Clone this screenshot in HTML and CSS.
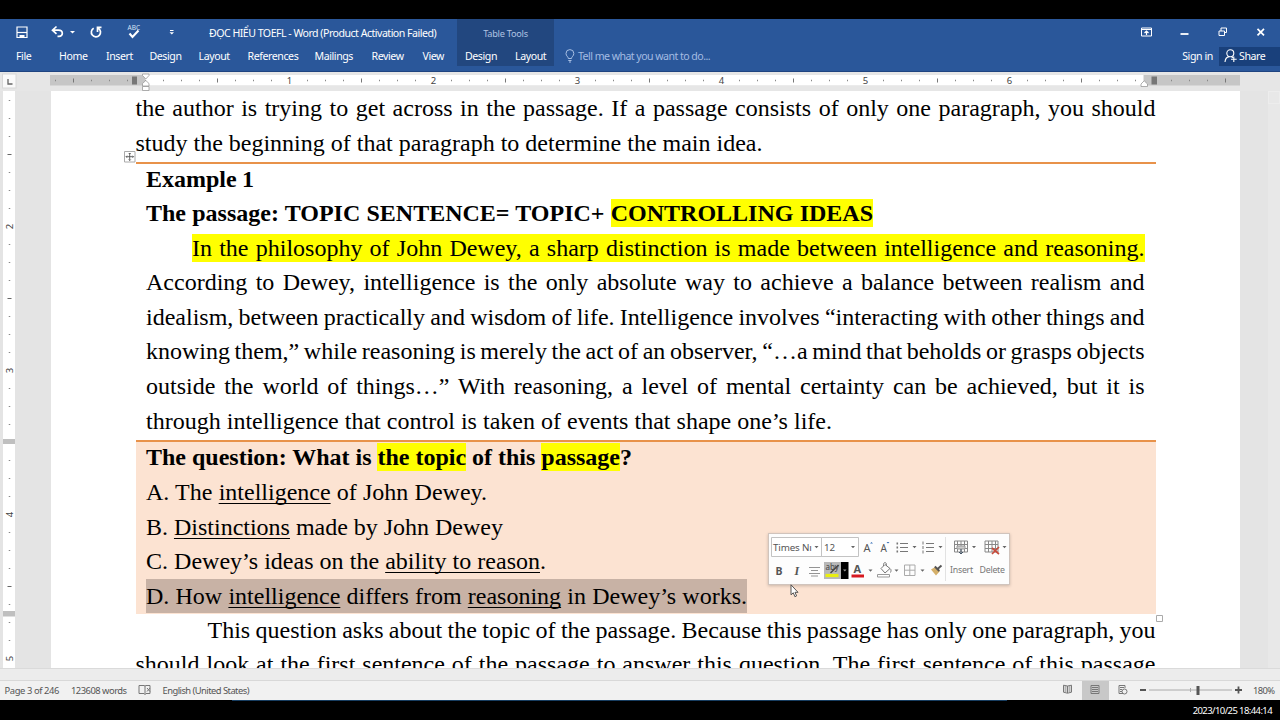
FILE: index.html
```html
<!DOCTYPE html>
<html lang="en">
<head>
<meta charset="utf-8">
<title>ĐỌC HIỂU TOEFL - Word</title>
<link rel="stylesheet" href="styles.css">
</head>
<body>
<div class="screen">
  <header class="ribbon">
    <div class="left">
      <div class="titlebar">
        <svg class="qat" width="200" height="28" viewBox="0 19 200 28" fill="none" stroke="#fff">
          <path d="M17 27h10v10.500h-10z" stroke-width="1.200"/><path d="M17 32.500h10" stroke-width="1.200"/><path d="M19.500 38v-3h5v3" fill="#fff" stroke="none"/>
          <path d="M56.500 26.500l-4 3.700 4 3.700M53 30.200h5.500c5 0 5 6.200.5 6.200h-1.500" stroke-width="1.700"/>
          <path d="M70 31h5l-2.500 2.500z" fill="#fff" stroke="none"/>
          <path d="M98.500 28.400a4.600 4.600 0 1 1-4.800-.2M97.500 32v-4.600h4" stroke-width="1.700"/>
          <path d="M129.500 33.500l3 3.500 6-6.500" stroke-width="2.100"/>
          <path d="M170 30.500h3.500" stroke-width="1"/><path d="M169.500 32.200h4.500l-2.200 2.200z" fill="#fff" stroke="none"/>
          <text x="127.500" y="29.500" class="abc">ABC</text>
        </svg>
        <span class="doc-title">ĐỌC HIỂU TOEFL - Word (Product Activation Failed)</span>
      </div>
      <nav class="tabs"><span>File</span><span>Home</span><span>Insert</span><span>Design</span><span>Layout</span><span>References</span><span>Mailings</span><span>Review</span><span>View</span></nav>
    </div>
    <div class="tools">
      <div class="tools-title">Table Tools</div>
      <div class="tools-tabs"><span>Design</span><span>Layout</span></div>
    </div>
    <div class="tell">
      <svg width="10" height="14" viewBox="0 0 10 14" fill="none" stroke="#a9c0e4"><path d="M3.300 9.500c0-2-2.300-2.300-2.300-5a3.900 3.900 0 0 1 7.800 0c0 2.700-2.300 3-2.300 5zM3.300 11.500h3.200M4 13h2"/></svg>
      <span>Tell me what you want to do...</span>
    </div>
    <div class="right">
      <svg width="145" height="28" viewBox="1135 19 145 28" fill="none" stroke="#fff">
        <path d="M1141.500 28h10v8h-10zM1141.500 29.500h10" /><path d="M1146.500 35v-4M1144.500 33l2-2 2 2" stroke-width="1.200"/>
        <path d="M1180.500 34h8" stroke-width="1.800"/>
        <path d="M1219 31h5.500v4.500h-5.500zM1221 31v-3h5.500v4.500h-2"/>
        <path d="M1257.500 28.800l6.500 6.500M1264 28.800l-6.500 6.500" stroke-width="1.700"/>
      </svg>
      <div class="account"><span class="signin">Sign in</span>
        <span class="share"><svg width="14" height="14" viewBox="0 0 14 14" fill="none" stroke="#fff" stroke-width="1.100"><circle cx="6.300" cy="4.300" r="3.500"/><path d="M1 13c.3-3.500 2-5 4-5.400M7.500 7.800l1.500 1M9.800 7.500v5.500M7 10.300h5.700"/></svg>Share</span></div>
    </div>
  </header>

  <div class="ruler">
    <svg width="1280" height="20" viewBox="0 72 1280 20">
      <rect x="2.500" y="74" width="13.500" height="14" fill="#fafafa" stroke="#d8d8d8"/>
      <path d="M8 79v5h4.500" fill="none" stroke="#666" stroke-width="1.300"/>
      <rect x="50" y="75" width="1190" height="10.500" fill="#c6c6c6"/>
      <rect x="145" y="75" width="998.500" height="10.500" fill="#fff"/>
      <path d="M55 80.500h1180" stroke="#888" stroke-width="1.300" stroke-dasharray="1 17"/>
      <path d="M73 80.500h1160" stroke="#777" stroke-width="4" stroke-dasharray="1 143"/>
      <g fill="#fff"><rect x="285" y="76" width="8" height="9"/><rect x="429" y="76" width="8" height="9"/><rect x="573" y="76" width="8" height="9"/><rect x="717" y="76" width="8" height="9"/><rect x="861" y="76" width="8" height="9"/><rect x="1005" y="76" width="8" height="9"/></g>
      <g class="num"><text x="289.500" y="84">1</text><text x="433.500" y="84">2</text><text x="577.500" y="84">3</text><text x="721.500" y="84">4</text><text x="865.500" y="84">5</text><text x="1009.500" y="84">6</text></g>
      <rect x="132" y="76.500" width="5" height="8" fill="#777"/><rect x="1151.500" y="76.500" width="5.500" height="8" fill="#777"/>
      <g fill="#fff" stroke="#999" stroke-width=".8"><path d="M142.500 74h6.500v1.500l-3.200 3.500-3.300-3.500zM142.500 86v-2.500l3.300-3 3.200 3v2.500zM142.500 86.500h6.500v4h-6.500zM1141 86.500v-2.500l3.200-3.200 3.300 3.200v2.500z"/></g>
    </svg>
  </div>

  <div class="work">
    <svg class="vruler" width="50" height="577" viewBox="0 91 50 577">
      <rect x="3" y="91" width="12" height="577" fill="#fff"/>
      <path d="M9.500 100v568" stroke="#888" stroke-width="1.500" stroke-dasharray="1 17"/>
      <path d="M9.500 154v514" stroke="#666" stroke-width="4" stroke-dasharray="1 143"/>
      <g fill="#fff"><rect x="5" y="222" width="9" height="8"/><rect x="5" y="366" width="9" height="8"/><rect x="5" y="510" width="9" height="8"/><rect x="5" y="654" width="9" height="8"/></g>
      <g fill="#bfbfbf"><rect x="3" y="439" width="12" height="5"/><rect x="3" y="611" width="12" height="5.500"/></g>
      <g class="num"><text transform="translate(13 226.500) rotate(-90)">2</text><text transform="translate(13 370.500) rotate(-90)">3</text><text transform="translate(13 514.500) rotate(-90)">4</text><text transform="translate(13 658.500) rotate(-90)">5</text></g>
    </svg>
    <main class="page">
      <div class="para">
        <p class="line first">the author is trying to get across in the passage. If a passage consists of only one paragraph, you should</p>
        <p class="line w627">study the beginning of that paragraph to determine the main idea.</p>
      </div>
      <section class="cell">
        <p class="line head w108"><b>Example 1</b></p>
        <p class="line w727"><b>The passage: TOPIC SENTENCE= TOPIC+ <mark>CONTROLLING IDEAS</mark></b></p>
        <p class="line indent"><mark>In the philosophy of John Dewey, a sharp distinction is made between intelligence and reasoning.</mark></p>
        <p class="line">According to Dewey, intelligence is the only absolute way to achieve a balance between realism and</p>
        <p class="line">idealism, between practically and wisdom of life. Intelligence involves “interacting with other things and</p>
        <p class="line">knowing them,” while reasoning is merely the act of an observer, “…a mind that beholds or grasps objects</p>
        <p class="line">outside the world of things…” With reasoning, a level of mental certainty can be achieved, but it is</p>
        <p class="line w686">through intelligence that control is taken of events that shape one’s life.</p>
      </section>
      <section class="cell question">
        <p class="line head w486"><b>The question: What is <mark>the topic</mark> of this <mark>passage</mark>?</b></p>
        <p class="line w341">A. The <u>intelligence</u> of John Dewey.</p>
        <p class="line w357">B. <u>Distinctions</u> made by John Dewey</p>
        <p class="line w400">C. Dewey’s ideas on the <u>ability to reason</u>.</p>
        <p class="line selected w601">D. How <u>intelligence</u> differs from <u>reasoning</u> in Dewey’s works.</p>
      </section>
      <div class="para after">
        <p class="line indent2">This question asks about the topic of the passage. Because this passage has only one paragraph, you</p>
        <p class="line">should look at the first sentence of the passage to answer this question. The first sentence of this passage</p>
      </div>
    </main>
    <div class="scroll"><i></i></div>
  </div>
  <div class="hscroll"></div>

  <footer class="status">
    <span class="pages">Page 3 of 246</span><span class="words">123608 words</span>
    <svg width="14" height="12" viewBox="0 0 14 12" fill="none" stroke="#777"><path d="M6 1.500H1v8h5l1 1V2zM7 2l1-.5h4v8H8l-1 1M9 4l3 3.500M12 4l-3 3.500"/></svg>
    <span class="lang">English (United States)</span>
    <svg class="views" width="234" height="19" viewBox="1046 681 234 19" fill="none" stroke="#777">
      <rect x="1082" y="681" width="27" height="19" fill="#c8c8c8" stroke="none"/>
      <path d="M1067.500 686l-4-.8v7l4 1 4-1v-7l-4 .8v7M1064.500 687h2M1064.500 689h2M1064.500 691h2M1068.500 687h2M1068.500 689h2M1068.500 691h2"/>
      <path d="M1091 685.500h8v8h-8zM1092 687.500h6M1092 689.500h6M1092 691.500h6"/>
      <path d="M1125 688v-2.500h-6v8h4M1120 687.500h4M1120 689.500h2M1120 691.500h2"/><circle cx="1124.500" cy="691.500" r="2.500"/>
      <path d="M1140 690h6M1235 690h7M1238.500 686.500v7" stroke="#555" stroke-width="1.800"/>
      <path d="M1149 690h83M1190.500 688v4" stroke="#aaa"/><rect x="1196.500" y="686" width="3" height="9" fill="#555" stroke="none"/>
      <text x="1253" y="694" class="zoom">180%</text>
    </svg>
  </footer>
  <div class="clock">2023/10/25 18:44:14</div>

  <svg class="handle move" width="12" height="12" viewBox="0 0 12 12"><path d="M.5.5h10.500v10.500H.5z" fill="#fff" stroke="#aaa"/><path d="M5.700 2v7.500M2 5.700h7.500M4.700 3l1-1 1 1M4.700 8.500l1 1 1-1M3 4.700l-1 1 1 1M8.500 4.700l1 1-1 1" fill="none" stroke="#555" stroke-width=".9"/></svg>
  <svg class="handle resize" width="7" height="7" viewBox="0 0 7 7"><path d="M.5.5h6v6h-6z" fill="#fff" stroke="#aaa"/></svg>

  <aside class="mini">
    <svg width="240" height="50" viewBox="769 534 240 50" fill="none" stroke="#777">
      <path d="M771.500 537.500h50v19h-50zM821.500 537.500h37v19h-37z" fill="#fff" stroke="#c3c3c3"/>
      <path d="M945.500 537v44" stroke="#e2e2e2"/>
      <g fill="#666" stroke="none"><path d="M814.500 546h4l-2 2.200zM851 546h4l-2 2.200zM912.500 546h4l-2 2.200zM938.500 546h4l-2 2.200zM972 546h4l-2 2.200zM1002.500 546h4l-2 2.200zM868.500 569.500h4l-2 2.200zM894.500 569.500h4l-2 2.200zM920.500 569.500h4l-2 2.200z"/></g>
      <g fill="#555" stroke="none"><text x="773" y="550.500" class="m">Times Nı</text><text x="824" y="550.500" class="m">12</text><text x="863.500" y="552" class="a">A</text><text x="880.500" y="552" class="a small">A</text><text x="950" y="573" class="lab">Insert</text><text x="979.500" y="573" class="lab">Delete</text><text x="775.500" y="574.500" class="b">B</text><text x="794.500" y="574.500" class="it">I</text></g>
      <path d="M870 543.500l1.500-1.500 1.500 1.500zM886.500 542h3l-1.500 1.500z" fill="#3972b8" stroke="none"/>
      <path d="M900 543.500h8M900 547.500h8M900 551.500h8M926 543.500h8M926 547.500h8M926 551.500h8"/>
      <path d="M896.500 543.500h1.600M896.500 547.500h1.600M896.500 551.500h1.600" stroke-width="1.800"/><path d="M923 541.500v3M923 546v3M923 550.500v3"/>
      <path d="M809 567.500h11M811 570.500h7M809 573.500h11M811 576h7" stroke="#888" stroke-width=".9"/>
      <path d="M824 562h17v17h-17z" fill="#b8b8b8" stroke="none"/><path d="M841 562h7.500v17h-7.500z" fill="#000" stroke="none"/><path d="M843 569.500h3.500l-1.700 2z" fill="#999" stroke="none"/>
      <text x="825.500" y="570" class="ab">aby</text><path d="M825.500 575.500h13" stroke="#e9ee10" stroke-width="3.200"/><path d="M838.500 565l-6 6-2 2" stroke="#444" stroke-width="1.500"/>
      <text x="853.500" y="573" class="colour">A</text><path d="M851.500 576h12.500" stroke="#d71920" stroke-width="3"/>
      <path d="M881 568.500l4-4 5 4-5 4.500zM883.500 566v-1.500c0-2.500 3-2.500 3 0v1.500M890 568.500c1.500 1 1 3 .5 4"/><path d="M877.500 574.500h12v2.500h-12z" stroke="#999" fill="#fff"/>
      <path d="M904.500 565h10.500v10.500h-10.500zM909.800 565v10.500M904.500 570.200H915" stroke="#aaa"/>
      <path d="M931 569.500l5 6 4-4.500-4-4.500z" fill="#d5b06a" stroke="none"/><path d="M937 569.500l4.500-4M934.800 566.500l4.500 4.500" stroke="#555" stroke-width="1.900"/>
      <path d="M954.500 541h13v11h-13zM954.500 544.500h13M954.500 548.500h13M957.500 541v11M961 541v11M964.500 541v11" stroke="#888"/><path d="M957 546h8v3h-8z" fill="#ccc" stroke="#999"/><path d="M961 549v5M959 552l2 2 2-2" stroke="#456"/>
      <path d="M985 541h13v11h-13zM985 544.500h13M985 548.500h13M988.500 541v11M992 541v11M995.500 541v11" stroke="#888"/><path d="M992 548l7 6M999 547l-7 7" stroke="#c64b3b" stroke-width="1.700"/>
    </svg>
  </aside>
  <svg class="cursor" width="9" height="14" viewBox="0 0 9 14"><path d="M1 .8v10l2.300-2 1.600 3.900 1.700-.8L5 8.300h3z" fill="#fff" stroke="#444" stroke-width=".9"/></svg>
</div>
</body>
</html>
```

FILE: styles.css
```css
* { box-sizing: border-box; }
body { margin: 0; background: #000; font-family: "Noto Sans", sans-serif; font-size: 10.600px; }
svg { display: block; flex: none; }
.screen { position: relative; width: 1280px; height: 720px; overflow: hidden; padding-top: 19px; display: flex; flex-direction: column; white-space: nowrap; }

.ribbon { flex: none; height: 53px; background: #2a579a; border-bottom: 1px solid #1f4480; display: flex; color: #fff; line-height: 18px; }
.left { width: 457px; }
.titlebar { height: 28px; display: flex; align-items: center; }
.abc { font: 6.500px "Noto Sans", sans-serif; fill: #d6e2f4; stroke: none; }
.doc-title { margin-left: 9px; letter-spacing: -.51px; }
.tabs { display: grid; grid-template-columns: 43px 47px 43.500px 49px 49px 67px 57px 51px 34px; padding-left: 16px; height: 19px; letter-spacing: -.42px; }
.tools { width: 97px; height: 47px; background: #22477f; letter-spacing: -.42px; }
.tools-title { height: 28px; line-height: 29px; text-align: center; font-size: 9.200px; letter-spacing: -.25px; color: #b0c3e2; }
.tools-tabs { display: grid; grid-template-columns: 50px 39px; padding-left: 8px; }
.tell { display: flex; gap: 3px; height: 18px; margin: 28px 0 0 11px; align-items: center; color: #a4bce2; letter-spacing: -.54px; }
.right { width: 145px; margin-left: auto; }
.account { display: flex; justify-content: flex-end; letter-spacing: -.4px; }
.signin { margin-right: 6px; }
.share { width: 61px; height: 19px; background: #19407b; display: flex; align-items: center; gap: 1px; padding: 0 0 1px 5px; }

.ruler { flex: none; height: 19px; background: #e6e6e6; }
.num { font: 9.500px "Noto Sans", sans-serif; fill: #444; text-anchor: middle; }
.work { flex: none; height: 577px; background: #e4e4e4; display: flex; overflow: hidden; }
.page { width: 1189.500px; margin: 0 0 0 .5px; padding: 0 84px 0 85px; background: #fff; font: 24px/34.600px "Liberation Serif", serif; word-spacing: -3px; color: #000; }
.line { margin: 0; height: 34.600px; line-height: 34.600px; text-align: justify; text-align-last: justify; white-space: normal; }
.first { height: 34px; line-height: 34px; }
.para .line { width: 1020px; }
.para .w627 { width: 627px; height: 37.400px; line-height: 36px; }
.cell { border-top: 2px solid #e8924a; width: 1020px; padding: 0 11px 0 10.500px; height: 278px; }
.cell .head { height: 31.600px; line-height: 31px; }
.question { background: #fce3d2; height: 173.800px; }
.cell.question .head { height: 32.700px; line-height: 31px; }
.indent { padding-left: 46px; }
.para .indent2 { padding-left: 72px; }
.w108 { width: 108px; }
.w727 { width: 727px; }
.w686 { width: 686px; }
.w486 { width: 486px; }
.w341 { width: 341px; }
.w357 { width: 357px; }
.w400 { width: 400px; }
.w601 { width: 601px; }
mark { background: #ff0; color: inherit; padding: 1px 0; }
u { text-decoration-thickness: 1.300px; text-underline-offset: 3px; text-decoration-skip-ink: none; }
.selected { background: #c8b2a5; }
.after { margin-top: -1.500px; }

.scroll { width: 12px; margin-left: auto; background: #e8e8e8; }
.scroll i { display: block; height: 13px; border: 1px solid #ededed; }
.hscroll { flex: none; height: 13px; background: #ececec; border-top: 1px solid #dadada; border-bottom: 1px solid #d8d8d8; }
.status { flex: none; height: 19px; background: #f1f1f1; display: flex; align-items: center; padding: 0 0 1px 4.500px; color: #555; font-size: 9.400px; letter-spacing: -.54px; }
.pages { width: 66.500px; letter-spacing: -.4px; }
.words { width: 67px; letter-spacing: -.5px; }
.lang { margin-left: 10.500px; }
.views { margin-left: auto; position: relative; top: .5px; }
.zoom { font-size: 9.400px; fill: #555; stroke: none; letter-spacing: -.6px; }
.clock { color: #fff; font-size: 9.500px; line-height: 22px; text-align: right; padding-right: 8px; letter-spacing: -.6px; background: linear-gradient(#173d60, #173d60) 232px 0 / 775px 1px no-repeat; }

.handle { position: absolute; }
.move { left: 124px; top: 151px; }
.resize { left: 1156px; top: 615px; }
.mini { position: absolute; left: 768px; top: 533px; width: 242px; height: 52px; background: #fdfdfd; border: 1px solid #d0c4bd; box-shadow: 0 1px 3px #0003; }
.m { font-size: 9.800px; letter-spacing: -.15px; }
.lab { font-size: 8.800px; letter-spacing: -.25px; fill: #777; }
.a { font-size: 11px; }
.small { font-size: 10px; }
.b { font: bold 10.500px "Noto Sans", sans-serif; }
.it { font: italic bold 12px "Liberation Serif", serif; }
.ab { font-size: 8px; fill: #444; stroke: none; }
.colour { font: bold 11px "Noto Sans", sans-serif; fill: #555; stroke: none; }
.cursor { position: absolute; left: 790px; top: 584px; }
```
